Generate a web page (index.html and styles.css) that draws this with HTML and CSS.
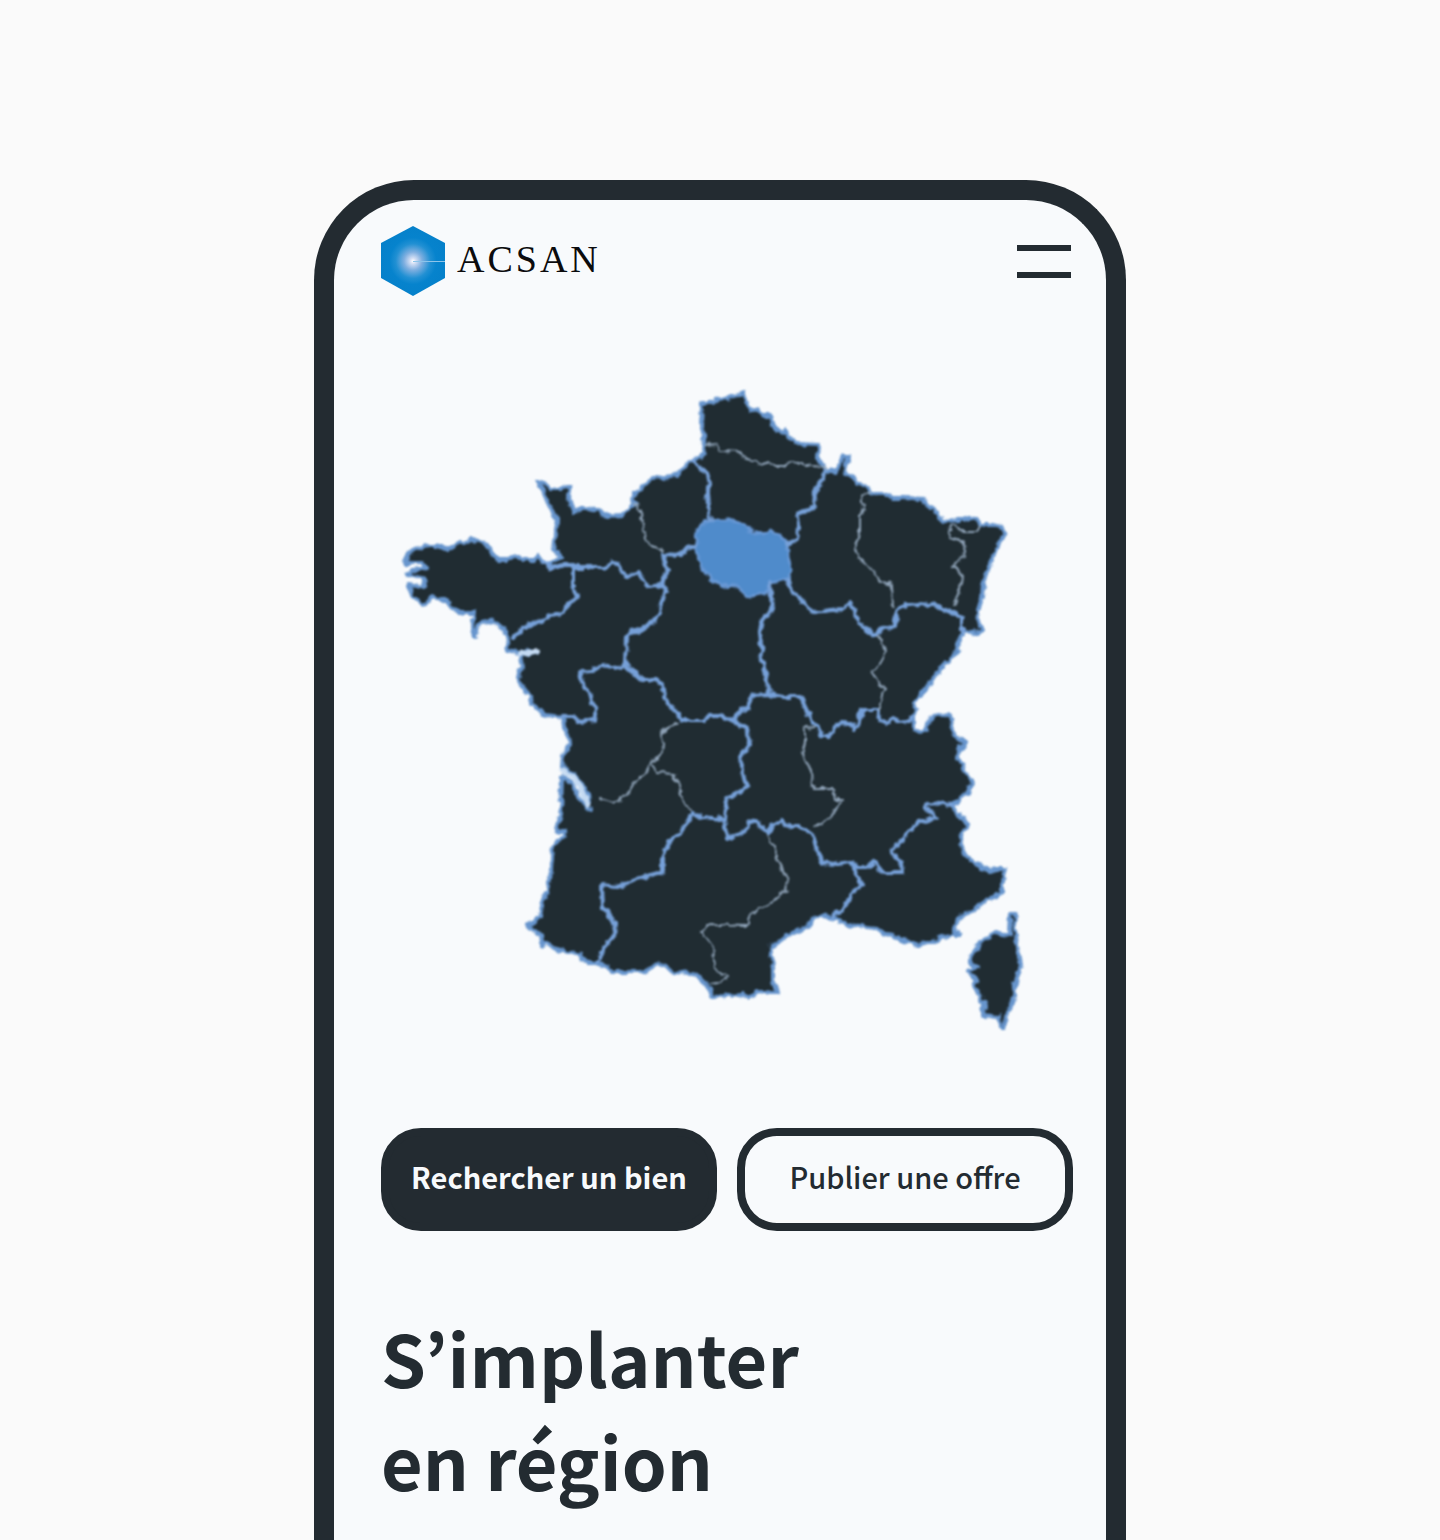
FILE: index.html
```html
<!DOCTYPE html>
<html lang="fr">
<head>
<meta charset="utf-8">
<meta name="viewport" content="width=device-width, initial-scale=1">
<title>ACSAN</title>
<link rel="stylesheet" href="styles.css">
</head>
<body>
<div class="phone">
  <header class="header">
    <a class="brand" href="#" aria-label="ACSAN">
      <svg class="brand-mark" viewBox="0 0 64 70" aria-hidden="true">
        <defs>
          <radialGradient id="glow" gradientUnits="userSpaceOnUse" cx="32" cy="35" r="36">
            <stop offset="0" stop-color="#ffffff"/>
            <stop offset="0.08" stop-color="#d3def4"/>
            <stop offset="0.25" stop-color="#7fafe0"/>
            <stop offset="0.48" stop-color="#2190d3"/>
            <stop offset="0.65" stop-color="#0683cd"/>
            <stop offset="1" stop-color="#0580ca"/>
          </radialGradient>
        </defs>
        <path d="M32 0L64 17V52L32 70L0 52V17Z" fill="url(#glow)"/>
        <path d="M32 35.500H64" stroke="#8cc4ea" stroke-width="1"/>
      </svg>
      <span class="brand-name">ACSAN</span>
    </a>
    <button class="menu" type="button" aria-label="Menu"><span class="menu-bar"></span><span class="menu-bar"></span></button>
  </header>
  <main>
    <svg class="map" viewBox="381 380 692 660" role="img" aria-label="Carte des régions de France">
      <defs>
        <filter id="coast" filterUnits="userSpaceOnUse" x="381" y="380" width="692" height="660" color-interpolation-filters="sRGB">
          <feTurbulence type="fractalNoise" baseFrequency="0.13" numOctaves="2" seed="4" result="noise"/>
          <feDisplacementMap in="SourceGraphic" in2="noise" scale="7" xChannelSelector="R" yChannelSelector="G"/>
          <feGaussianBlur stdDeviation="0.8"/>
        </filter>
      </defs>
      <g filter="url(#coast)">
      <g class="land">
        <path d="M743 393L747 403L752 410L758 411L763 415L771 415L773 424L777 430L782 432L786 431L790 438L796 443L818 444L817 458L827 469L836 471L839 466L843 457L848 457L845 466L846 474L852 476L858 483L865 485L870 492L878 495L890 495L893 498L904 498L923 499L928 507L935 510L939 518L945 521L957 520L965 520L972 517L978 520L981 525L992 525L1002 527L1004 532L1001 541L996 550L990 563L987 574L983 584L982 597L978 610L979 622L983 630L974 633L962 632L959 640L958 652L951 657L945 664L937 673L930 684L921 694L915 703L914 717L914 729L922 733L927 729L930 718L938 714L949 716L952 724L953 731L958 738L965 743L959 750L958 758L963 768L968 775L972 782L969 793L961 797L952 805L958 814L967 823L965 829L961 837L963 852L970 859L977 865L990 871L997 869L1005 869L1002 880L1002 893L995 897L987 900L974 909L960 918L953 930L960 934L951 934L942 938L933 942L926 942L917 945L910 941L902 940L893 935L885 934L877 928L866 927L853 925L842 922L832 918L822 915L812 920L803 930L795 933L787 935L779 942L770 948L772 957L773 967L773 981L778 993L770 993L763 991L757 993L750 998L742 995L713 997L709 989L704 983L699 976L692 973L673 972L665 966L657 963L650 969L643 972L613 972L606 966L597 963L588 963L580 955L572 953L553 948L547 943L542 944L541 935L527 926L540 917L543 900L548 889L550 880L553 847L557 840L566 837L565 832L557 830L561 813L562 777L572 784L578 797L590 810L588 795L582 784L574 773L562 767L563 755L569 747L568 734L564 728L563 717L545 715L538 710L532 703L528 694L525 690L518 681L522 667L520 655L537 653L531 650L518 652L507 650L508 633L500 627L497 624L489 621L482 622L477 627L475 637L472 626L474 613L457 613L450 607L447 600L440 600L433 597L422 605L417 599L412 595L408 585L422 587L425 582L422 578L407 575L412 570L427 568L422 563L405 563L408 554L415 549L430 546L442 546L448 550L453 547L460 542L470 540L481 541L490 548L493 556L499 560L508 560L515 556L523 560L534 560L538 555L543 562L550 565L555 559L562 557L554 550L556 533L557 520L551 510L547 500L543 490L537 481L545 483L550 488L562 488L570 487L569 498L573 513L580 508L587 508L596 510L607 516L623 515L629 508L635 506L632 497L642 488L653 478L665 477L677 475L685 466L693 460L705 454L702 440L705 434L701 427L702 403L710 403L723 398L733 397Z"/>
        <path d="M1010 914L1016 914L1015 930L1018 947L1021 965L1018 974L1015 985L1013 1003L1007 1012L1004 1028L1000 1027L999 1017L983 1015L984 1006L980 995L973 987L976 978L967 971L977 967L970 961L971 955L980 943L990 936L997 933L1009 935Z"/>
      </g>
      <path class="region-active" d="M697 532L703 522L718 520L733 520L743 525L753 532L762 534L772 531L779 535L787 543L788 556L791 570L787 580L770 583L767 593L755 595L745 597L738 586L720 585L711 578L702 569L699 559L695 550Z"/>
      <g class="border-major">
        <path d="M543 562L553 568L563 565L573 565L573 587L576 598L569 604L563 613L550 615L542 621L533 623L523 628L513 638"/>
        <path d="M573 567H608L613 563L618 564L621 572L628 576L638 572L643 580L649 587L662 585"/>
        <path d="M692 460L699 467L708 475L710 484L707 495L710 520"/>
        <path d="M695 545L688 549L680 555L663 554L664 561L669 570L663 578L663 586L667 592L661 603L660 613L652 622L643 630L630 632L626 636L625 665L620 669L608 666L602 665L592 671L580 672L582 682L588 690L591 700L597 709L595 720L578 722L574 717L562 717"/>
        <path d="M625 665L633 672L642 680L655 680L662 684L664 696L669 705L676 711L682 720L703 720L709 716L723 716L735 722L748 730L749 747L740 757L742 772L747 786L738 792L728 797L726 806L725 819"/>
        <path d="M735 720L738 713L748 707L752 695L768 694L784 697L801 697L805 707L813 723L820 731L822 736L830 736L838 725L843 722L852 724L854 730L858 726L862 710L877 710L881 720L887 723L893 718L903 723L913 717"/>
        <path d="M770 583L771 597L772 610L762 621L760 630L762 660L767 680L768 694"/>
        <path d="M827 469L823 479L815 490L814 507L806 511L796 514L798 524L797 540L788 544"/>
        <path d="M787 580L793 593L804 602L812 612L842 609L849 603L854 610L858 623L866 629L875 635L882 628L895 627L896 612L902 606L917 604L933 605L942 609L952 612L962 619L962 632"/>
        <path d="M692 813L688 822L682 830L673 837L667 847L662 858L662 872L647 876L633 880L617 887L602 885L603 908L609 916L616 925L614 936L605 947L597 962"/>
        <path d="M692 813L702 817L724 819L727 839L743 833L749 823L756 820L762 828L767 833L772 825L782 822L791 827L800 827L813 834L817 850L823 863L836 864L852 862L857 867L867 867L875 861L879 869L884 873L903 873L902 863L890 851L900 843L909 831L920 822L935 819L931 811L925 808L928 803L952 805"/>
        <path d="M852 862L856 874L862 886L850 894L847 904L832 918"/>
      </g>
      <path class="estuary" d="M562 771L573 776L580 787L588 805M520 653L536 652"/>
      <g class="border-minor">
        <path d="M705 445L717 444L722 451L740 452L743 458L752 460L760 465L769 462L775 466L785 466L791 462L803 464L812 466L827 467"/>
        <path d="M635 505L642 513L643 526L645 540L652 546L662 551"/>
        <path d="M870 492L861 497L863 507L860 515L860 533L856 542L857 553L864 564L872 569L880 581L892 585L893 607"/>
        <path d="M980 525L977 532H965L952 525L950 538L965 543L963 557L953 565L962 575L960 590L953 605"/>
        <path d="M877 635L882 641L885 653L880 662L873 673L877 681L884 688L881 700L878 710"/>
        <path d="M813 727L805 728L805 742L802 755L807 765L812 770L813 788L833 788L835 800L843 800L835 810L830 819L815 827"/>
        <path d="M678 723L660 732L664 744L663 752L652 763L643 775L634 783L627 795L613 803L600 799"/>
        <path d="M652 763L657 773L673 774L679 785L682 800L690 810"/>
        <path d="M767 835L774 845L777 860L788 880L786 890L778 898L752 913L747 926L707 925L702 933L713 947L715 970L727 977L718 983L710 984"/>
      </g>
      </g>
    </svg>
    <div class="actions">
      <button class="button button-primary" type="button">Rechercher un bien</button>
      <button class="button button-outline" type="button">Publier une offre</button>
    </div>
    <h1 class="title">S’implanter<br>en région</h1>
  </main>
</div>
</body>
</html>
```
FILE: styles.css
```css
*,
*::before,
*::after {
  box-sizing: border-box;
}

body {
  margin: 0;
  padding-top: 180px;
  background: #fafafa;
  color: #232b31;
  font-family: "Noto Sans CJK KR", "Noto Sans", sans-serif;
}

.phone {
  max-width: 812px;
  min-height: calc(100vh - 180px);
  margin: 0 auto;
  padding: 26px 33px 0 47px;
  border: 20px solid #232b31;
  border-bottom: 0;
  border-radius: 100px 100px 0 0;
  background: #f8fafc;
}

.header {
  display: flex;
  align-items: center;
  justify-content: space-between;
}

.brand {
  display: flex;
  align-items: center;
  gap: 12px;
  color: #0b0b0d;
  text-decoration: none;
}

.brand-mark {
  display: block;
  width: 64px;
  height: 70px;
}

.brand-name {
  padding-bottom: 4px;
  font: 38px/44px "Liberation Serif", serif;
  letter-spacing: 3px;
}

.menu {
  display: grid;
  gap: 21px;
  width: 56px;
  padding: 0 2px 0 0;
  border: 0;
  background: none;
}

.menu-bar {
  height: 6px;
  background: #232b31;
}

.map {
  display: block;
  width: 100%;
  height: auto;
  margin-top: 84px;
  stroke-linejoin: round;
  stroke-linecap: round;
}

.land {
  fill: #202c32;
  stroke: #6795cd;
  stroke-width: 4;
}

.region-active {
  fill: #4f8bcb;
  stroke: #6797d4;
  stroke-width: 3;
}

.border-major {
  fill: none;
  stroke: #76a0d8;
  stroke-width: 4;
}

.border-minor {
  fill: none;
  stroke: #90a4b9;
  stroke-width: 2;
}

.estuary {
  fill: none;
  stroke: #c4daf2;
  stroke-width: 6;
}

.actions {
  display: grid;
  grid-template-columns: 1fr 1fr;
  gap: 20px;
  margin-top: 88px;
}

.button {
  height: 103px;
  padding: 0 0 8px;
  border: 8px solid #232b31;
  border-radius: 40px;
  font-family: inherit;
  font-size: 29px;
  line-height: 40px;
  white-space: nowrap;
}

.button-primary {
  background: #232b31;
  color: #f8fafc;
  font-weight: 700;
}

.button-outline {
  background: transparent;
  color: #232b31;
  font-weight: 500;
}

.title {
  margin: 74px 0 0;
  font-size: 72px;
  line-height: 103px;
  font-weight: 700;
}
```
